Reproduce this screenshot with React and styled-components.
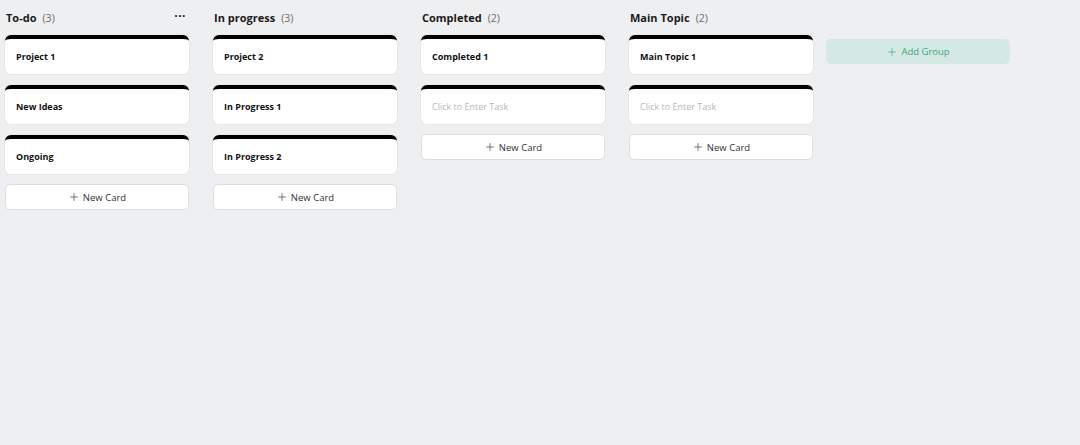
import React from "react";
import styled, { createGlobalStyle } from "styled-components";
import { Plus } from "lucide-react";

const GlobalStyle = createGlobalStyle`
	html, body {
		margin: 0;
		padding: 0;
		background: #eeeff1;
		font-family: "Open Sans", "Noto Sans", sans-serif;
	}
`;

const Board = styled.div`
	display: flex;
	align-items: flex-start;
	padding: 8px 5px;
	min-height: 429px;
	background: #eeeff1;
`;
const Column = styled.div`
	width: 184px;
	margin-right: 24px;
	display: flex;
	flex-direction: column;
`;
const Header = styled.div`
	height: 27px;
	display: flex;
	align-items: center;
	padding-left: 1px;
	box-sizing: border-box;
	margin-top: -4px;
	margin-bottom: 4px;
`;
const Title = styled.span`
	font-size: 11px;
	font-weight: 700;
	color: #1a1a1a;
`;
const Count = styled.span`
	font-size: 10.5px;
	color: #6b6b6b;
	margin-left: 6px;
`;
const Dots = styled.span`
	margin-left: auto;
	margin-right: 3px;
	font-size: 12px;
	font-weight: 700;
	letter-spacing: 0.5px;
	color: #222;
	line-height: 1;
	margin-top: -4px;
`;
const Cards = styled.div`
	display: flex;
	flex-direction: column;
	gap: 11px;
`;
const Card = styled.div`
	height: 39px;
	box-sizing: border-box;
	background: #fff;
	border-top: 4px solid #000;
	border-radius: 6px;
	box-shadow: 0 0 0 1px #e6e7ea;
	display: flex;
	align-items: center;
	padding: 0 11px;
	font-size: 9px;
	color: ${props => (props.placeholder ? "#b9b9b9" : "#111")};
	font-weight: ${props => (props.placeholder ? 400 : 700)};
`;
const NewCard = styled.button`
	height: 26px;
	margin-top: 10px;
	border: 1px solid #dedfe2;
	border-radius: 5px;
	background: #fff;
	display: flex;
	align-items: center;
	justify-content: center;
	gap: 3px;
	font-family: "Open Sans", "Noto Sans", sans-serif;
	font-size: 9.5px;
	color: #333;
	padding: 0;
	cursor: pointer;
`;
const AddGroup = styled.button`
	width: 184px;
	height: 25px;
	margin-top: 31px;
	margin-left: -11px;
	border: none;
	border-radius: 5px;
	background: #d5e9e4;
	color: #3aa67f;
	display: flex;
	align-items: center;
	justify-content: center;
	gap: 3px;
	font-family: "Open Sans", "Noto Sans", sans-serif;
	font-size: 9.5px;
	padding: 0;
	cursor: pointer;
`;

const groups = [
	{ title: "To-do", cards: ["Project 1", "New Ideas", "Ongoing"], menu: true },
	{ title: "In progress", cards: ["Project 2", "In Progress 1", "In Progress 2"] },
	{ title: "Completed", cards: ["Completed 1", null] },
	{ title: "Main Topic", cards: ["Main Topic 1", null] },
];

const App = () => (
	<>
		<GlobalStyle />
		<Board>
			{groups.map(group => (
				<Column key={group.title}>
					<Header>
						<Title>{group.title}</Title>
						<Count>({group.cards.length})</Count>
						{group.menu && <Dots>···</Dots>}
					</Header>
					<Cards>
						{group.cards.map((card, i) =>
							card ? (
								<Card key={i}>{card}</Card>
							) : (
								<Card key={i} placeholder="true">Click to Enter Task</Card>
							)
						)}
					</Cards>
					<NewCard>
						<Plus size={12} strokeWidth={1.3} />
						New Card
					</NewCard>
				</Column>
			))}
			<AddGroup>
				<Plus size={12} strokeWidth={1.3} />
				Add Group
			</AddGroup>
		</Board>
	</>
);

export default App;
